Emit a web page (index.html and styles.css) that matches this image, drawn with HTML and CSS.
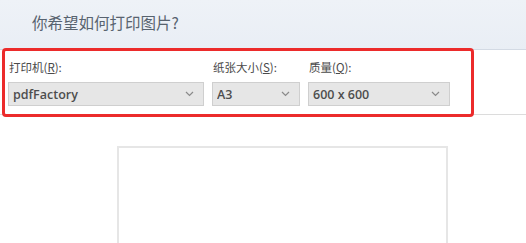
FILE: index.html
```html
<!DOCTYPE html>
<html lang="zh">
<head>
<meta charset="utf-8">
<link rel="stylesheet" href="styles.css">
</head>
<body>
<div class="page">
  <header class="header">
    <h1 class="title">你希望如何打印图片?</h1>
  </header>
  <section class="options">
    <div class="field f-printer">
      <label class="label">打印机(<u>R</u>):</label>
      <div class="select"><span class="value">pdfFactory</span><svg class="chev" width="9" height="6" viewBox="0 0 9 6"><path d="M1 1l3.5 3.5L8 1" fill="none" stroke="#8a8a8a" stroke-width="1.2"/></svg></div>
    </div>
    <div class="field f-paper">
      <label class="label">纸张大小(<u>S</u>):</label>
      <div class="select"><span class="value">A3</span><svg class="chev" width="9" height="6" viewBox="0 0 9 6"><path d="M1 1l3.5 3.5L8 1" fill="none" stroke="#8a8a8a" stroke-width="1.2"/></svg></div>
    </div>
    <div class="field f-quality">
      <label class="label">质量(<u>Q</u>):</label>
      <div class="select"><span class="value">600 x 600</span><svg class="chev" width="9" height="6" viewBox="0 0 9 6"><path d="M1 1l3.5 3.5L8 1" fill="none" stroke="#8a8a8a" stroke-width="1.2"/></svg></div>
    </div>
    <div class="highlight"></div>
  </section>
  <section class="preview-area">
    <div class="preview"></div>
  </section>
</div>
</body>
</html>
```
FILE: styles.css
```css
html, body {
  margin: 0;
  padding: 0;
  background: #ffffff;
}
.page {
  width: 526px;
  height: 243px;
  overflow: hidden;
  position: relative;
  font-family: "Open Sans", "Noto Sans CJK SC", sans-serif;
}
.header {
  height: 50px;
  background: linear-gradient(#eef2f7, #e9eef5);
  border-bottom: 1px solid #d3dae4;
  box-sizing: border-box;
  display: flex;
  align-items: center;
  padding-left: 32px;
  padding-bottom: 6px;
}
.title {
  margin: 0;
  font-family: "Noto Sans CJK SC", sans-serif;
  font-weight: 400;
  font-size: 15.5px;
  color: #58636f;
}
.options {
  position: relative;
  height: 65px;
  border-bottom: 1px solid #dcdcdc;
  box-sizing: border-box;
  display: flex;
  gap: 8px;
  padding-left: 8px;
  padding-top: 10px;
}
.field {
  display: flex;
  flex-direction: column;
}
.f-printer { width: 196px; }
.f-paper { width: 88px; }
.f-quality { width: 142px; }
.label {
  font-family: "Noto Sans CJK SC", sans-serif;
  font-size: 11.5px;
  line-height: 14px;
  color: #4a4a4a;
  height: 22px;
  padding-left: 1px;
}
.label u {
  text-underline-offset: 1px;
}
.select {
  height: 24px;
  box-sizing: border-box;
  background: #e6e6e6;
  border: 1px solid #cfcfcf;
  display: flex;
  align-items: center;
  justify-content: space-between;
  padding: 0 9px 0 4px;
}
.value {
  font-size: 12.5px;
  color: #333333;
  font-weight: 600;
  opacity: 0.85;
}
.highlight {
  position: absolute;
  left: 2px;
  top: -2px;
  width: 472px;
  height: 69px;
  box-sizing: border-box;
  border: 3px solid #ec2b2b;
  border-radius: 4px;
}
.preview-area {
  display: flex;
  padding-left: 117px;
  padding-top: 31px;
}
.preview {
  width: 331px;
  height: 120px;
  box-sizing: border-box;
  border: 2px solid #e6e6e6;
  background: #ffffff;
}
```
